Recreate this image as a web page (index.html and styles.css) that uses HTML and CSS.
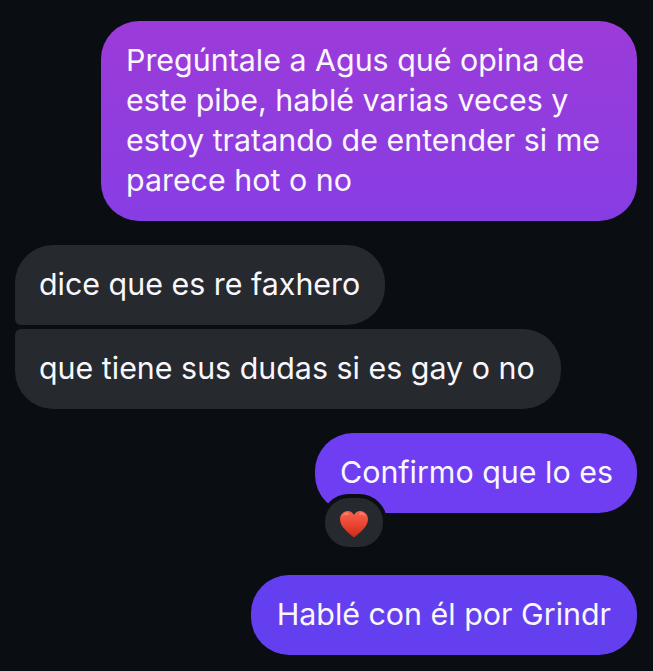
FILE: index.html
```html
<!DOCTYPE html>
<html lang="es">
<head>
  <meta charset="UTF-8" />
  <title>Mensajes</title>
  <link rel="stylesheet" href="styles.css">
</head>
<body>
  <main class="chat">
    <div class="msg sent first">Pregúntale a Agus qué opina de este pibe, hablé varias veces y estoy tratando de entender si me parece hot o no</div>

    <div class="group">
      <div class="msg received top">dice que es re faxhero</div>
      <div class="msg received bottom">que tiene sus dudas si es gay o no</div>
    </div>

    <div class="msg sent violet has-reaction">
      Confirmo que lo es
      <span class="reaction">
        <svg class="heart" viewBox="0 0 30 30" width="30" height="30" aria-label="corazón">
          <defs>
            <linearGradient id="heartFill" x1="0" y1="0" x2="0" y2="1">
              <stop offset="0" stop-color="#f8634f"/>
              <stop offset="0.55" stop-color="#e9432f"/>
              <stop offset="1" stop-color="#c92a1e"/>
            </linearGradient>
          </defs>
          <path d="M15 28.5C9.5 24 1 18 1 10.3 1 5.6 4.5 2 8.6 2c2.8 0 5 1.4 6.4 4 1.4-2.6 3.6-4 6.4-4C25.5 2 29 5.6 29 10.3 29 18 20.500 24 15 28.500Z" fill="url(#heartFill)"/>
          <path d="M8.500 3.500c-2.500 0-4.500 1.800-5.200 4.200 1.800-1.900 4.300-2.300 6.500-1.500-.2-1.300-.4-2-1.300-2.700Z" fill="#ffa596" opacity=".55"/>
          <path d="M21.500 3.500c2.500 0 4.500 1.800 5.200 4.200-1.800-1.900-4.300-2.300-6.500-1.500.2-1.300.4-2 1.300-2.700Z" fill="#ffa596" opacity=".55"/>
        </svg>
      </span>
    </div>

    <div class="msg sent indigo">Hablé con él por Grindr</div>
  </main>
</body>
</html>
```

FILE: styles.css
```css
html, body {
  margin: 0;
  padding: 0;
}
body {
  background: #0a0d12;
  color: #f9f7fc;
  font-family: Inter, "Liberation Sans", sans-serif;
  font-size: 30.4px;
  line-height: 40px;
}
.chat {
  display: flex;
  flex-direction: column;
  align-items: flex-end;
  padding: 21px 16px 16px 15px;
}
.msg {
  box-sizing: border-box;
  padding: 19px 25px 21px;
  border-radius: 38px;
}
.sent {
  align-self: flex-end;
}
.first {
  width: 536px;
  background: linear-gradient(180deg, #9c3bd9 0%, #873de4 100%);
  margin-bottom: 24px;
}
.group {
  align-self: flex-start;
  display: flex;
  flex-direction: column;
  align-items: flex-start;
  gap: 4px;
  margin-bottom: 24px;
}
.received {
  background: #26292e;
  padding-left: 24px;
}
.received.top {
  border-bottom-left-radius: 6px;
}
.received.bottom {
  padding-right: 26px;
  border-top-left-radius: 6px;
}
.violet {
  background: #6f3ef2;
  padding-right: 24px;
}
.indigo {
  background: #643ff0;
  padding-left: 26px;
  padding-right: 26px;
}
.has-reaction {
  position: relative;
  margin-bottom: 62px;
}
.reaction {
  position: absolute;
  left: 6px;
  top: 61px;
  width: 58px;
  height: 49px;
  border: 4px solid #0a0d12;
  border-radius: 28px;
  background: #26292e;
  display: flex;
  align-items: center;
  justify-content: center;
}
.heart {
  display: block;
  margin-top: 2px;
}
```
